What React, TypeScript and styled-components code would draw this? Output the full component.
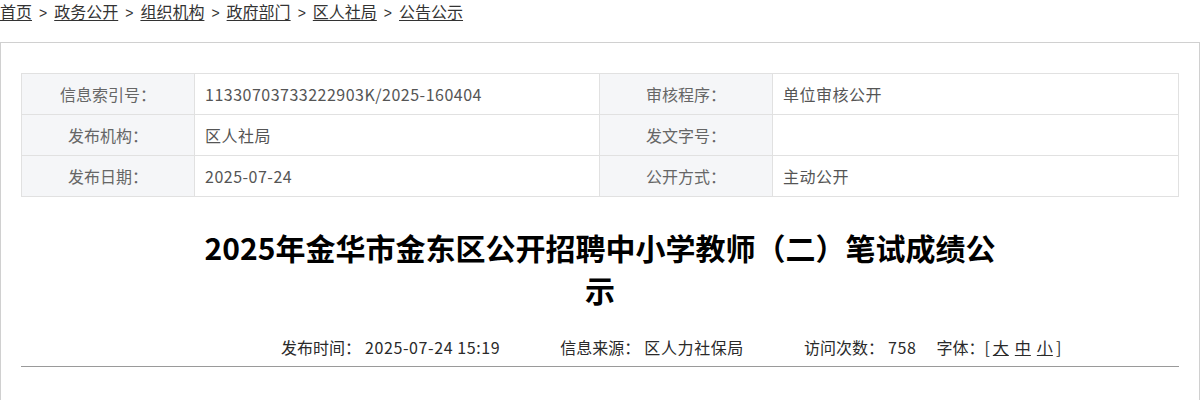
import React from 'react';
import styled, { createGlobalStyle } from 'styled-components';

const GlobalStyle = createGlobalStyle`
  html, body {
    margin: 0;
    padding: 0;
    background: #ffffff;
  }
  body {
    font-family: "Noto Sans CJK SC", "Noto Sans", "Liberation Sans", sans-serif;
    color: #333333;
  }
`;

const crumbs = ['首页', '政务公开', '组织机构', '政府部门', '区人社局', '公告公示'];

const infoRows = [
  ['信息索引号：', '11330703733222903K/2025-160404', '审核程序：', '单位审核公开'],
  ['发布机构：', '区人社局', '发文字号：', ''],
  ['发布日期：', '2025-07-24', '公开方式：', '主动公开'],
];

const App = () => {
  return (
    <>
      <GlobalStyle />
      <Breadcrumb>
        {crumbs.map((c, i) => (
          <React.Fragment key={c}>
            <CrumbLink href="#">{c}</CrumbLink>
            {i < crumbs.length - 1 && <Sep>&gt;</Sep>}
          </React.Fragment>
        ))}
      </Breadcrumb>

      <Panel>
        <InfoTable>
          <colgroup>
            <col style={{ width: 173 }} />
            <col style={{ width: 405 }} />
            <col style={{ width: 173 }} />
            <col />
          </colgroup>
          <tbody>
            {infoRows.map((row) => (
              <tr key={row[0]}>
                <LabelCell>{row[0]}</LabelCell>
                <ValueCell>{row[1]}</ValueCell>
                <LabelCell>{row[2]}</LabelCell>
                <ValueCell>{row[3]}</ValueCell>
              </tr>
            ))}
          </tbody>
        </InfoTable>

        <Title>2025年金华市金东区公开招聘中小学教师（二）笔试成绩公示</Title>

        <MetaBar>
          <MetaItem $gap={60}>
            发布时间：<MetaValue>2025-07-24 15:19</MetaValue>
          </MetaItem>
          <MetaItem $gap={60}>
            信息来源：<MetaValue>区人力社保局</MetaValue>
          </MetaItem>
          <MetaItem $gap={20}>
            访问次数：<MetaValue>758</MetaValue>
          </MetaItem>
          <MetaItem $gap={0}>
            字体：[
            <SizeLink href="#">大</SizeLink>
            <SizeLink href="#">中</SizeLink>
            <SizeLink href="#">小</SizeLink>
            ]
          </MetaItem>
        </MetaBar>
      </Panel>
    </>
  );
};

const Breadcrumb = styled.div`
  height: 22px;
  line-height: 22px;
  font-size: 16px;
  color: #333333;
  margin-bottom: 20px;
  white-space: nowrap;
`;

const CrumbLink = styled.a`
  color: #333333;
  text-decoration: underline;
  text-underline-offset: 2px;
`;

const Sep = styled.span`
  margin: 0 7px;
  font-size: 14px;
  font-family: "Liberation Sans", sans-serif;
`;

const Panel = styled.div`
  border: 1px solid #d0d0d0;
  border-bottom: none;
  padding: 30px 20px 0;
  min-height: 400px;
`;

const InfoTable = styled.table`
  width: 100%;
  border-collapse: collapse;
  table-layout: fixed;
`;

const LabelCell = styled.td`
  height: 40px;
  padding: 0;
  border: 1px solid #e1e1e1;
  background: #f5f6f8;
  text-align: center;
  font-size: 16px;
  color: #666666;
`;

const ValueCell = styled.td`
  height: 40px;
  padding: 0 10px;
  border: 1px solid #e1e1e1;
  background: #ffffff;
  font-size: 16px;
  letter-spacing: 0.5px;
  color: #555555;
`;

const Title = styled.h1`
  width: 800px;
  margin: 29px auto 0;
  text-align: center;
  font-size: 30px;
  line-height: 42px;
  font-weight: 700;
  color: #000000;
`;

const MetaBar = styled.div`
  display: flex;
  align-items: center;
  margin-top: 24px;
  padding: 0 0 6px 260px;
  height: 26px;
  line-height: 26px;
  font-size: 16px;
  color: #2a2a2a;
  border-bottom: 1px solid #9a9a9a;
`;

const MetaItem = styled.div<{ $gap: number }>`
  margin-right: ${(p) => p.$gap}px;
  white-space: nowrap;
`;

const MetaValue = styled.span`
  margin-left: 4px;
  letter-spacing: 0.6px;
`;

const SizeLink = styled.a`
  color: #2a2a2a;
  text-decoration: underline;
  margin: 0 3px;
`;

export default App;
